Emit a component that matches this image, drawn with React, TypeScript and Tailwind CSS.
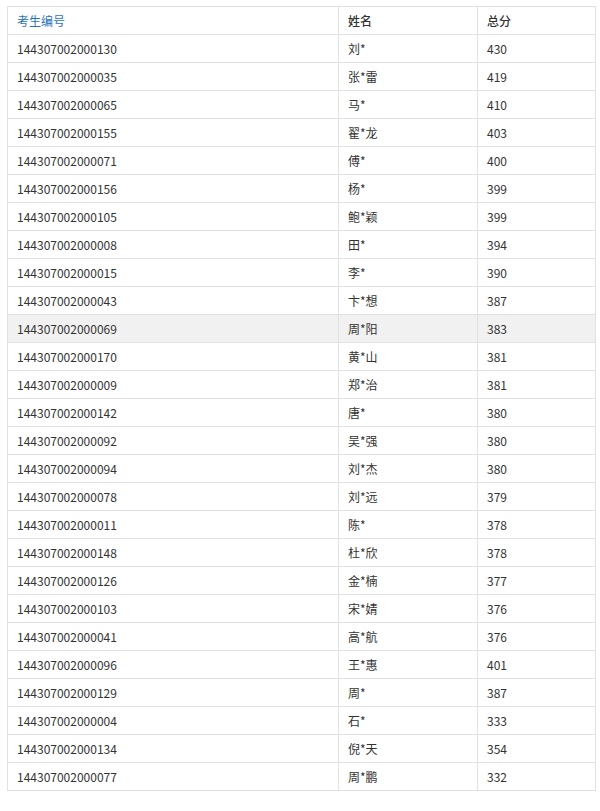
const rows: [string, string, string][] = [
  ["144307002000130", "刘*", "430"],
  ["144307002000035", "张*雷", "419"],
  ["144307002000065", "马*", "410"],
  ["144307002000155", "翟*龙", "403"],
  ["144307002000071", "傅*", "400"],
  ["144307002000156", "杨*", "399"],
  ["144307002000105", "鲍*颖", "399"],
  ["144307002000008", "田*", "394"],
  ["144307002000015", "李*", "390"],
  ["144307002000043", "卞*想", "387"],
  ["144307002000069", "周*阳", "383"],
  ["144307002000170", "黄*山", "381"],
  ["144307002000009", "郑*治", "381"],
  ["144307002000142", "唐*", "380"],
  ["144307002000092", "吴*强", "380"],
  ["144307002000094", "刘*杰", "380"],
  ["144307002000078", "刘*远", "379"],
  ["144307002000011", "陈*", "378"],
  ["144307002000148", "杜*欣", "378"],
  ["144307002000126", "金*楠", "377"],
  ["144307002000103", "宋*婧", "376"],
  ["144307002000041", "高*航", "376"],
  ["144307002000096", "王*惠", "401"],
  ["144307002000129", "周*", "387"],
  ["144307002000004", "石*", "333"],
  ["144307002000134", "倪*天", "354"],
  ["144307002000077", "周*鹏", "332"],
];

const cell = "border border-[#e1e1e1] h-[28px] py-0 px-[9px] text-left align-middle";

export default function App() {
  return (
    <div className="bg-white min-h-[811px] pt-[6px] pl-[7px] font-['Noto_Sans_CJK_SC',sans-serif] text-[12px] text-[#333]">
      <table className="border-collapse w-[588px] table-fixed">
        <colgroup>
          <col className="w-[331px]" />
          <col className="w-[139px]" />
          <col className="w-[118px]" />
        </colgroup>
        <thead>
          <tr>
            <th className={`${cell} font-normal text-[#2873b8]`}>考生编号</th>
            <th className={`${cell} font-medium text-[#333]`}>姓名</th>
            <th className={`${cell} font-medium text-[#333]`}>总分</th>
          </tr>
        </thead>
        <tbody>
          {rows.map(([id, name, score]) => (
            <tr key={id} className={id === "144307002000069" ? "bg-[#f1f1f1]" : ""}>
              <td className={cell}>{id}</td>
              <td className={cell}>{name}</td>
              <td className={cell}>{score}</td>
            </tr>
          ))}
        </tbody>
      </table>
    </div>
  );
}
